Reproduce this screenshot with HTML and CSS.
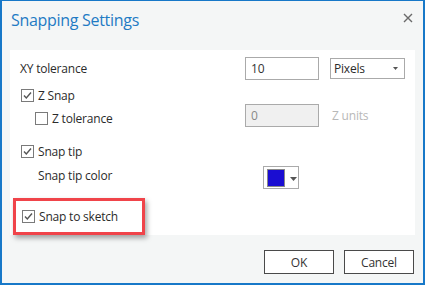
FILE: index.html
```html
<!DOCTYPE html>
<html>
<head>
<meta charset="utf-8">
<link rel="stylesheet" href="styles.css">
</head>
<body>
<div class="window">
  <div class="titlebar">
    <span class="title">Snapping Settings</span>
    <svg class="close" width="10" height="10" viewBox="0 0 10 10"><path d="M1 1 L9 9 M9 1 L1 9" stroke="#6a6a6a" stroke-width="1.4" fill="none"/></svg>
  </div>
  <div class="panel">
    <div class="row r1">
      <span class="label">XY tolerance</span>
      <span class="input">10</span>
      <span class="select">Pixels<svg class="caret" width="5" height="3" viewBox="0 0 5 3"><path d="M0 0 H5 L2.5 3 Z" fill="#555"/></svg></span>
    </div>
    <div class="row r2">
      <span class="cb checked"><svg width="11" height="11" viewBox="0 0 11 11"><path d="M2 5.5 L4.3 8 L9 2.5" stroke="#555" stroke-width="1.4" fill="none"/></svg></span>
      <span class="cblabel">Z Snap</span>
    </div>
    <div class="row r3">
      <span class="indent">
        <span class="cb"></span>
        <span class="cblabel">Z tolerance</span>
      </span>
      <span class="input disabled">0</span>
      <span class="units">Z units</span>
    </div>
    <div class="row r4">
      <span class="cb checked"><svg width="11" height="11" viewBox="0 0 11 11"><path d="M2 5.5 L4.3 8 L9 2.5" stroke="#555" stroke-width="1.4" fill="none"/></svg></span>
      <span class="cblabel">Snap tip</span>
    </div>
    <div class="row r5">
      <span class="sublabel">Snap tip color</span>
      <span class="colorbtn"><span class="swatch"></span><svg class="caret2" width="7" height="4" viewBox="0 0 7 4"><path d="M0 0 H7 L3.5 4 Z" fill="#555"/></svg></span>
    </div>
    <div class="highlight">
      <span class="cb checked"><svg width="11" height="11" viewBox="0 0 11 11"><path d="M2 5.5 L4.3 8 L9 2.5" stroke="#555" stroke-width="1.4" fill="none"/></svg></span>
      <span class="cblabel">Snap to sketch</span>
    </div>
  </div>
  <div class="footer">
    <button class="btn">OK</button>
    <button class="btn">Cancel</button>
  </div>
</div>
</body>
</html>
```

FILE: styles.css
```css
html, body {
  margin: 0;
  padding: 0;
}
body {
  font-family: "Open Sans", "Noto Sans", sans-serif;
  font-size: 12px;
  letter-spacing: -0.2px;
  color: #2b2b2b;
}
.window {
  width: 425px;
  height: 285px;
  box-sizing: border-box;
  border: 2px solid #1778c8;
  border-top-width: 1px;
  background: #f4f6f6;
  display: flex;
  flex-direction: column;
}
.titlebar {
  height: 49px;
  display: flex;
  align-items: flex-start;
  justify-content: space-between;
  padding: 8px 10px 0 9px;
  box-sizing: border-box;
}
.title {
  font-size: 16px;
  letter-spacing: -0.3px;
  color: #1f7bc4;
  line-height: 22px;
}
.close {
  margin-top: 4px;
}
.panel {
  margin-left: 8px;
  width: 405px;
  height: 185px;
  background: #fff;
  box-sizing: border-box;
  padding: 7px 0 0 10px;
}
.row {
  display: flex;
  align-items: center;
}
.label {
  width: 225px;
}
.input {
  width: 74px;
  height: 23px;
  box-sizing: border-box;
  border: 1px solid #aaa;
  padding-left: 5px;
  line-height: 21px;
  color: #333;
  background: #fff;
}
.input.disabled {
  background: #f0f0f0;
  color: #888;
}
.select {
  margin-left: 11px;
  width: 75px;
  height: 21px;
  box-sizing: border-box;
  border: 1px solid #aaa;
  padding: 0 6px 0 3px;
  line-height: 19px;
  display: flex;
  align-items: center;
  justify-content: space-between;
}
.r1 { height: 23px; }
.r2 { height: 17px; margin-top: 7px; }
.r3 { height: 23px; }
.r4 { height: 17px; margin-top: 16px; }
.r5 { height: 23px; margin-top: 6px; }
.cb {
  width: 13px;
  height: 13px;
  box-sizing: border-box;
  border: 1px solid #7a7a7a;
  background: #fff;
  display: inline-flex;
  align-items: center;
  justify-content: center;
  flex: none;
  margin-left: 1px;
}
.cblabel {
  margin-left: 4px;
}
.indent {
  width: 225px;
  display: flex;
  align-items: center;
  padding-left: 14px;
  box-sizing: border-box;
  margin-top: 5px;
}
.units {
  margin-left: 13px;
  color: #b8b8b8;
}
.sublabel {
  width: 225px;
  padding-left: 18px;
  box-sizing: border-box;
  margin-top: -4px;
}
.colorbtn {
  margin-left: 18px;
  width: 36px;
  height: 23px;
  box-sizing: border-box;
  border: 1px solid #aaa;
  display: flex;
  align-items: center;
  padding-left: 3px;
}
.swatch {
  width: 18px;
  height: 18px;
  box-sizing: border-box;
  border: 1px solid #8a8a8a;
  background: #1a0dd2;
}
.caret2 {
  margin-left: 5px;
  margin-top: 3px;
}
.highlight {
  margin-top: 9px;
  margin-left: -7px;
  width: 132px;
  height: 37px;
  box-sizing: border-box;
  border: 3px solid #f0444a;
  box-shadow: 2px 3px 5px rgba(0, 0, 0, 0.35);
  display: flex;
  align-items: center;
  padding-left: 5px;
}
.footer {
  display: flex;
  justify-content: flex-end;
  gap: 10px;
  padding: 15px 9px 0 0;
}
.btn {
  width: 70px;
  height: 24px;
  box-sizing: border-box;
  border: 1px solid #4a4a4a;
  background: #fff;
  font-family: "Open Sans", "Noto Sans", sans-serif;
  font-size: 12px;
  letter-spacing: -0.2px;
  color: #333;
  padding: 0;
}
```
